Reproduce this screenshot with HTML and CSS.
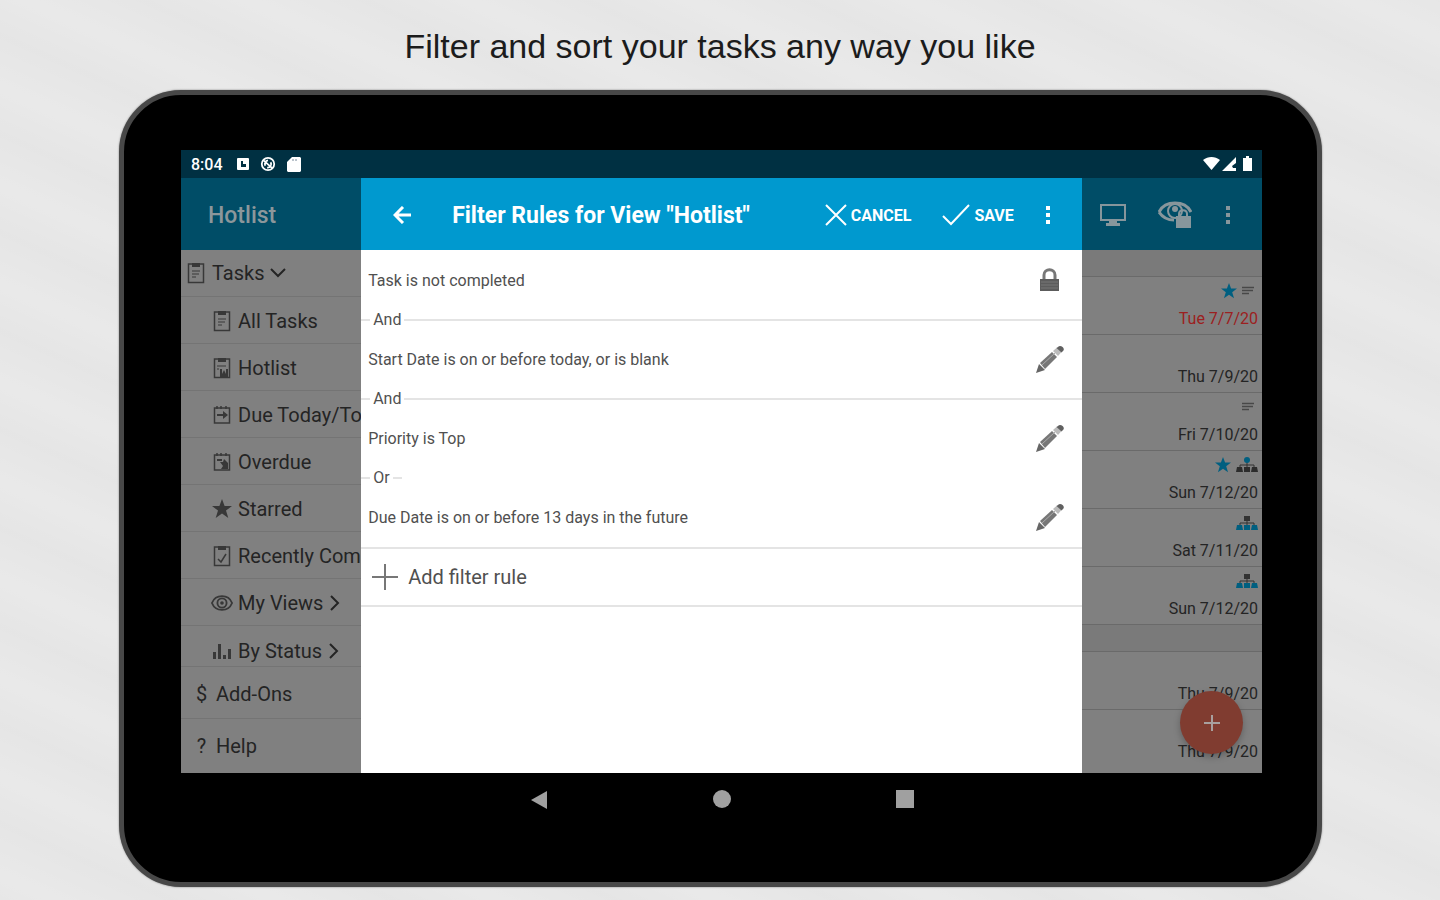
FILE: index.html
```html
<!DOCTYPE html>
<html lang="en">
<head>
<meta charset="utf-8">
<meta name="viewport" content="width=device-width, initial-scale=1">
<title>Filter Rules</title>
<link rel="stylesheet" href="styles.css">
</head>
<body>
<svg class="defs" aria-hidden="true">
  <symbol id="clip" viewBox="0 0 18 22"><path d="M1.5 2h15v18.500h-15z" fill="none" stroke="currentColor" stroke-width="1.500"/><path d="M5 1h8v4H5z" fill="currentColor"/><path d="M5 9h8M5 12h7M5 15h4" stroke="currentColor"/></symbol>
  <symbol id="cliphot" viewBox="0 0 18 22"><path d="M1.500 20.500V2h15v18.500z" fill="none" stroke="currentColor" stroke-width="1.500"/><path d="M5 1h8v4H5zM7 20v-8h2v5l2-4 2 4v-5h2v8z" fill="currentColor"/><path d="M4 9h9M4 12h2" stroke="currentColor"/></symbol>
  <symbol id="cal" viewBox="0 0 18 22"><path d="M1.500 4h15v15h-15zM4 2v3M8 2v3M13 2v3" fill="none" stroke="currentColor" stroke-width="1.500"/><path d="M4 10h6V7l5 4-5 4v-3H4z" fill="currentColor"/></symbol>
  <symbol id="calover" viewBox="0 0 18 22"><path d="M1.500 4h15v15h-15zM4 2v3M8 2v3M13 2v3" fill="none" stroke="currentColor" stroke-width="1.500"/><path d="M4 8h5v2H4zM7 11h3l1-3 4 4v6H8l2-3z" fill="currentColor"/></symbol>
  <symbol id="clipcheck" viewBox="0 0 18 22"><path d="M1.500 2h15v18.500h-15z" fill="none" stroke="currentColor" stroke-width="1.500"/><path d="M5 1h8v4H5z" fill="currentColor"/><path d="M5 14l3 3 5-8" fill="none" stroke="currentColor" stroke-width="1.500"/></symbol>
  <symbol id="star" viewBox="0 0 20 20"><path d="M10 0l2.600 7H20l-6 4.600L16.300 19 10 14.600 3.700 19 6 11.600 0 7h7.400z" fill="currentColor"/></symbol>
  <symbol id="eye" viewBox="0 0 24 20"><path d="M1 10C5 0 19 0 23 10 19 20 5 20 1 10z" fill="none" stroke="currentColor" stroke-width="2"/><circle cx="12" cy="10" r="5" fill="none" stroke="currentColor" stroke-width="2"/><circle cx="12" cy="10" r="2" fill="currentColor"/></symbol>
  <symbol id="bars" viewBox="0 0 20 20"><path d="M1 11h3v7H1zM6 3h3v15H6zM11 14h3v4h-3zM16 8h3v10h-3z" fill="currentColor"/></symbol>
  <symbol id="dots" viewBox="0 0 6 20"><path d="M1 1h4v4H1zM1 8h4v4H1zM1 15h4v4H1z" fill="currentColor"/></symbol>
  <symbol id="note" viewBox="0 0 12 10"><path d="M0 1.500h12M0 4.500h11M0 7.500h7" stroke="currentColor" stroke-width="1.500"/></symbol>
  <symbol id="pencil" viewBox="0 0 30 30"><path d="M1 29l3-9 6 6z" fill="#666"/><path d="M5 19L17 8l5 5-12 12z" fill="#777"/><path d="M18 7l4-3.500 4.500 4.500L23 12z" fill="#bbb"/><path d="M23 3c2-3 8 1 5 4l-1.500 1.500-5-4.500z" fill="#606060"/><path d="M7 21L20 9" stroke="#aaa"/></symbol>
</svg>
<h1 class="headline">Filter and sort your tasks any way you like</h1>
<div class="tablet">
  <div class="screen">
    <div class="status">
      <span class="clock">8:04</span>
      <svg width="12" height="14" viewBox="0 0 12 14"><path fill="#fff" fill-rule="evenodd" d="M1 1h10a1 1 0 011 1v10a1 1 0 01-1 1H1a1 1 0 01-1-1V2a1 1 0 011-1zm3 3v6h5V7H6V4z"/></svg>
      <svg width="16" height="16" viewBox="0 0 18 18" fill="none" stroke="#fff" stroke-width="2"><circle cx="9" cy="9" r="7"/><path d="M4 5l10 9M6 11a4 4 0 013-6M12 7a4 4 0 01-4 6"/></svg>
      <svg width="14" height="15" viewBox="0 0 14 15"><path d="M5 0h8l1 1v13l-1 1H1l-1-1V5z" fill="#fff"/><path d="M6 2v2M9 2v2" stroke="#789"/></svg>
      <span class="grow"></span>
      <svg width="50" height="16" viewBox="0 0 50 16" fill="#fff"><path d="M0 4c5-4 12-4 17 0l-8.500 10z"/><path d="M19 15L33 1v6l-4 3 1 2h3v3z"/><path d="M40 2h3V0h3v2h3v13h-9z"/></svg>
    </div>
    <div class="panes">
      <aside class="side">
        <header class="bar"><h2 class="view">Hotlist</h2></header>
        <nav class="nav">
          <button class="item top"><svg width="18" height="22"><use href="#clip"/></svg>Tasks<svg width="16" height="10" viewBox="0 0 16 10"><path d="M1 1l7 7 7-7" fill="none" stroke="currentColor" stroke-width="2"/></svg></button>
          <button class="item"><svg width="22" height="22"><use href="#clip"/></svg>All Tasks</button>
          <button class="item"><svg width="22" height="22"><use href="#cliphot"/></svg>Hotlist</button>
          <button class="item"><svg width="22" height="22"><use href="#cal"/></svg>Due Today/Tomorrow</button>
          <button class="item"><svg width="22" height="22"><use href="#calover"/></svg>Overdue</button>
          <button class="item"><svg width="22" height="20"><use href="#star"/></svg>Starred</button>
          <button class="item"><svg width="22" height="22"><use href="#clipcheck"/></svg>Recently Completed</button>
          <button class="item"><svg width="24" height="20"><use href="#eye"/></svg>My Views<svg class="chev" width="10" height="16" viewBox="0 0 10 16"><path d="M1 1l7 7-7 7" fill="none" stroke="currentColor" stroke-width="2"/></svg></button>
          <button class="item last"><svg width="22" height="20"><use href="#bars"/></svg>By Status<svg class="chev" width="10" height="16" viewBox="0 0 10 16"><path d="M1 1l7 7-7 7" fill="none" stroke="currentColor" stroke-width="2"/></svg></button>
          <button class="item foot"><span class="mark">$</span>Add-Ons</button>
          <button class="item foot"><span class="mark">?</span>Help</button>
        </nav>
      </aside>
      <main class="dialog">
        <header class="bar blue">
          <button class="icon" aria-label="Back"><svg width="20" height="18" viewBox="0 0 20 18"><path d="M18 9H3M10 1L2 9l8 8" fill="none" stroke="#fff" stroke-width="3"/></svg></button>
          <h2 class="title">Filter Rules for View "Hotlist"</h2>
          <button class="action"><svg width="22" height="22" viewBox="0 0 22 22"><path d="M1 1l20 20M21 1L1 21" stroke="#fff" stroke-width="2"/></svg>CANCEL</button>
          <button class="action"><svg width="28" height="22" viewBox="0 0 28 22"><path d="M1 12l8 8L27 1" fill="none" stroke="#fff" stroke-width="2"/></svg>SAVE</button>
          <button class="icon" aria-label="More options"><svg width="6" height="20"><use href="#dots"/></svg></button>
        </header>
        <div class="rule"><span>Task is not completed</span><svg width="30" height="24" viewBox="0 0 30 24"><path d="M9 12V7c0-7 11-7 11 0v5" fill="none" stroke="#777" stroke-width="3"/><path d="M5 11h19v12H5z" fill="#5c5c5c"/><path d="M6 14h17M6 17h17M6 20h17" stroke="#777"/></svg></div>
        <div class="join">And</div>
        <div class="rule"><span>Start Date is on or before today, or is blank</span><button class="edit" aria-label="Edit start date rule"><svg width="30" height="30"><use href="#pencil"/></svg></button></div>
        <div class="join">And</div>
        <div class="rule"><span>Priority is Top</span><button class="edit" aria-label="Edit priority rule"><svg width="30" height="30"><use href="#pencil"/></svg></button></div>
        <div class="join or">Or</div>
        <div class="rule"><span>Due Date is on or before 13 days in the future</span><button class="edit" aria-label="Edit due date rule"><svg width="30" height="30"><use href="#pencil"/></svg></button></div>
        <button class="add"><svg width="26" height="26" viewBox="0 0 26 26"><path d="M13 0v26M0 13h26" stroke="#777" stroke-width="2"/></svg>Add filter rule</button>
      </main>
      <section class="tasks">
        <header class="bar tools">
          <button class="icon" aria-label="Display"><svg width="26" height="22" viewBox="0 0 26 22"><path d="M1 1h24v15H1z" fill="none" stroke="currentColor" stroke-width="2"/><path d="M9 17h8v2h3v3H6v-3h3z" fill="currentColor"/></svg></button>
          <button class="icon" aria-label="View lock"><svg width="34" height="30" viewBox="0 0 34 30"><path d="M1 12C7 0 27 0 33 12M1 12c4 6 9 8 15 8" fill="none" stroke="currentColor" stroke-width="3"/><circle cx="17" cy="11" r="7" fill="none" stroke="currentColor" stroke-width="2"/><circle cx="17" cy="9" r="3" fill="currentColor"/><path d="M18 16h15v12H18z" fill="currentColor"/><path d="M21 17v-3c0-5 8-5 8 0v3" fill="none" stroke="currentColor" stroke-width="2"/></svg></button>
          <button class="icon" aria-label="More options"><svg width="6" height="20"><use href="#dots"/></svg></button>
        </header>
        <div class="group"></div>
        <div class="task late"><div class="flags"><svg class="teal" width="16" height="16" viewBox="0 0 20 20"><use href="#star"/></svg><svg class="lines" width="12" height="10"><use href="#note"/></svg></div>Tue 7/7/20</div>
        <div class="task"><div class="flags"></div>Thu 7/9/20</div>
        <div class="task"><div class="flags"><svg class="lines" width="12" height="10"><use href="#note"/></svg></div>Fri 7/10/20</div>
        <div class="task"><div class="flags"><svg class="teal" width="16" height="16" viewBox="0 0 20 20"><use href="#star"/></svg><svg width="22" height="16" viewBox="0 0 22 16"><path d="M11 5v5M4 11V8h14v3" fill="none" stroke="#333"/><circle cx="11" cy="3" r="3" fill="#005f80"/><path d="M1 10h5l1 5H0zM8 10h6v5H8zM16 10h5l1 5h-7z" fill="#2c2c2c"/></svg></div>Sun 7/12/20</div>
        <div class="task"><div class="flags"><svg width="22" height="16" viewBox="0 0 22 16"><path d="M11 5v5M4 11V8h14v3" fill="none" stroke="#333"/><path d="M8 1h6v5H8z" fill="#333"/><path d="M1 10h5l1 5H0zM8 10h6v5H8zM16 10h5l1 5h-7z" fill="#005f80"/></svg></div>Sat 7/11/20</div>
        <div class="task"><div class="flags"><svg width="22" height="16" viewBox="0 0 22 16"><path d="M11 5v5M4 11V8h14v3" fill="none" stroke="#333"/><path d="M8 1h6v5H8z" fill="#333"/><path d="M1 10h5l1 5H0zM8 10h6v5H8zM16 10h5l1 5h-7z" fill="#005f80"/></svg></div>Sun 7/12/20</div>
        <div class="group"></div>
        <div class="task"><div class="flags"></div>Thu 7/9/20</div>
        <div class="task end"><div class="flags"></div>Thu 7/9/20</div>
        <button class="fab" aria-label="Add task"><svg width="16" height="16" viewBox="0 0 16 16"><path d="M8 0v16M0 8h16" stroke="#a8a09e" stroke-width="2"/></svg></button>
      </section>
    </div>
  </div>
  <div class="keys">
    <button class="icon" aria-label="Back"><svg width="18" height="20" viewBox="0 0 18 20"><path d="M1 10L17 1v18z" fill="#a0a0a0"/></svg></button>
    <button class="icon" aria-label="Home"><svg width="18" height="18" viewBox="0 0 18 18"><circle cx="9" cy="9" r="9" fill="#a0a0a0"/></svg></button>
    <button class="icon" aria-label="Recent apps"><svg width="18" height="18" viewBox="0 0 18 18"><path d="M0 0h18v18H0z" fill="#a0a0a0"/></svg></button>
  </div>
</div>
</body>
</html>
```
FILE: styles.css
```css
* { box-sizing: border-box; }
body {
  margin: 0;
  min-height: 100vh;
  font-family: Roboto, "Liberation Sans", sans-serif;
  background:
    repeating-linear-gradient(24deg, rgba(255,255,255,0) 0, rgba(255,255,255,.1) 22px, rgba(255,255,255,0) 50px, rgba(0,0,0,.006) 70px, rgba(255,255,255,0) 90px),
    #e7e7e7;
}
h1, h2 { margin: 0; }
button {
  margin: 0;
  padding: 0;
  border: 0;
  background: none;
  color: inherit;
  font: inherit;
  text-align: left;
}
svg { display: block; flex: none; }
.defs { position: absolute; width: 0; height: 0; }
.headline {
  padding: 26px 0 24px;
  font: 400 34px/40px "Liberation Sans", Arial, sans-serif;
  color: #1c1c1c;
  text-align: center;
}
.tablet {
  margin: 0 118px 12px 119px;
  padding: 55px 55px 0 57px;
  border: 5px solid #484848;
  border-radius: 62px;
  background: #000;
  box-shadow: 0 0 2px #777;
}
.status {
  display: flex;
  align-items: center;
  gap: 11px;
  height: 28px;
  padding: 0 9px 0 10px;
  background: #003042;
  color: #fff;
}
.clock { padding: 1px 3px 0 0; font-size: 16px; font-weight: 500; }
.grow { flex: 1; }
.panes { display: grid; grid-template-columns: 1fr 4fr 1fr; }
.side, .tasks { min-width: 0; background: #808080; color: #242424; }
.bar {
  display: flex;
  align-items: center;
  height: 72px;
  padding-top: 2px;
  background: #004d67;
}
.view {
  padding-left: 27px;
  font-size: 23px;
  font-weight: 500;
  color: #8c979b;
}
.nav { overflow: hidden; }
.item {
  display: flex;
  align-items: center;
  gap: 5px;
  width: 100%;
  height: 47px;
  padding: 2px 0 0 30px;
  border-bottom: 1px solid #747474;
  font-size: 20px;
  white-space: nowrap;
}
.item > svg:first-child { width: 22px; color: #383838; }
.item.top { padding: 0 0 0 4px; }
.item.last { height: 41px; padding-top: 9px; }
.item.foot { height: 52px; padding-left: 14px; gap: 8px; }
.item.foot:last-child { border: 0; }
.mark { width: 13px; text-align: center; }
.chev { margin-left: 2px; }
.dialog { background: #fff; color: #505050; font-size: 16px; }
.blue {
  gap: 31px;
  padding: 2px 31px 0 32px;
  background: #0099cf;
  color: #fff;
}
.title { flex: 1; padding-left: 8px; font-size: 23px; font-weight: 700; white-space: nowrap; }
.action { display: flex; align-items: center; gap: 4px; font-size: 16px; font-weight: 700; }
.rule {
  display: flex;
  align-items: center;
  justify-content: space-between;
  height: 60px;
  padding: 0 17px 0 7px;
}
.join { display: flex; align-items: center; gap: 3px; height: 19px; line-height: 19px; }
.join::before, .join::after { content: ""; width: 9px; height: 2px; background: #e4e4e4; }
.join::after { flex: 1; }
.or::after { flex: none; }
.add {
  display: flex;
  align-items: center;
  gap: 10px;
  width: 100%;
  height: 60px;
  padding-left: 11px;
  border: solid #e4e4e4;
  border-width: 2px 0;
  font-size: 20px;
}
.tasks { position: relative; overflow: hidden; }
.tools { justify-content: space-between; padding: 2px 31px 0 18px; color: #87969c; }
.group { height: 27px; background: #7a7a7a; border-bottom: 1px solid #6a6a6a; }
.task {
  display: flex;
  flex-direction: column;
  align-items: flex-end;
  height: 58px;
  padding: 5px 4px 0 0;
  border-bottom: 1px solid #6a6a6a;
  font-size: 16px;
  line-height: 20px;
}
.task.end { height: 63px; border: 0; }
.late { color: #9c2020; }
.flags { display: flex; align-items: center; gap: 5px; height: 18px; margin-bottom: 9px; }
.teal { color: #005f80; }
.lines { margin-right: 4px; color: #484848; }
.fab {
  position: absolute;
  right: 19px;
  bottom: 19px;
  display: grid;
  place-items: center;
  width: 63px;
  height: 63px;
  border-radius: 50%;
  background: #803c30;
  box-shadow: 0 3px 7px rgba(0,0,0,.25);
}
.keys {
  display: flex;
  justify-content: center;
  align-items: flex-start;
  gap: 165px;
  height: 109px;
  padding-top: 17px;
}
```
